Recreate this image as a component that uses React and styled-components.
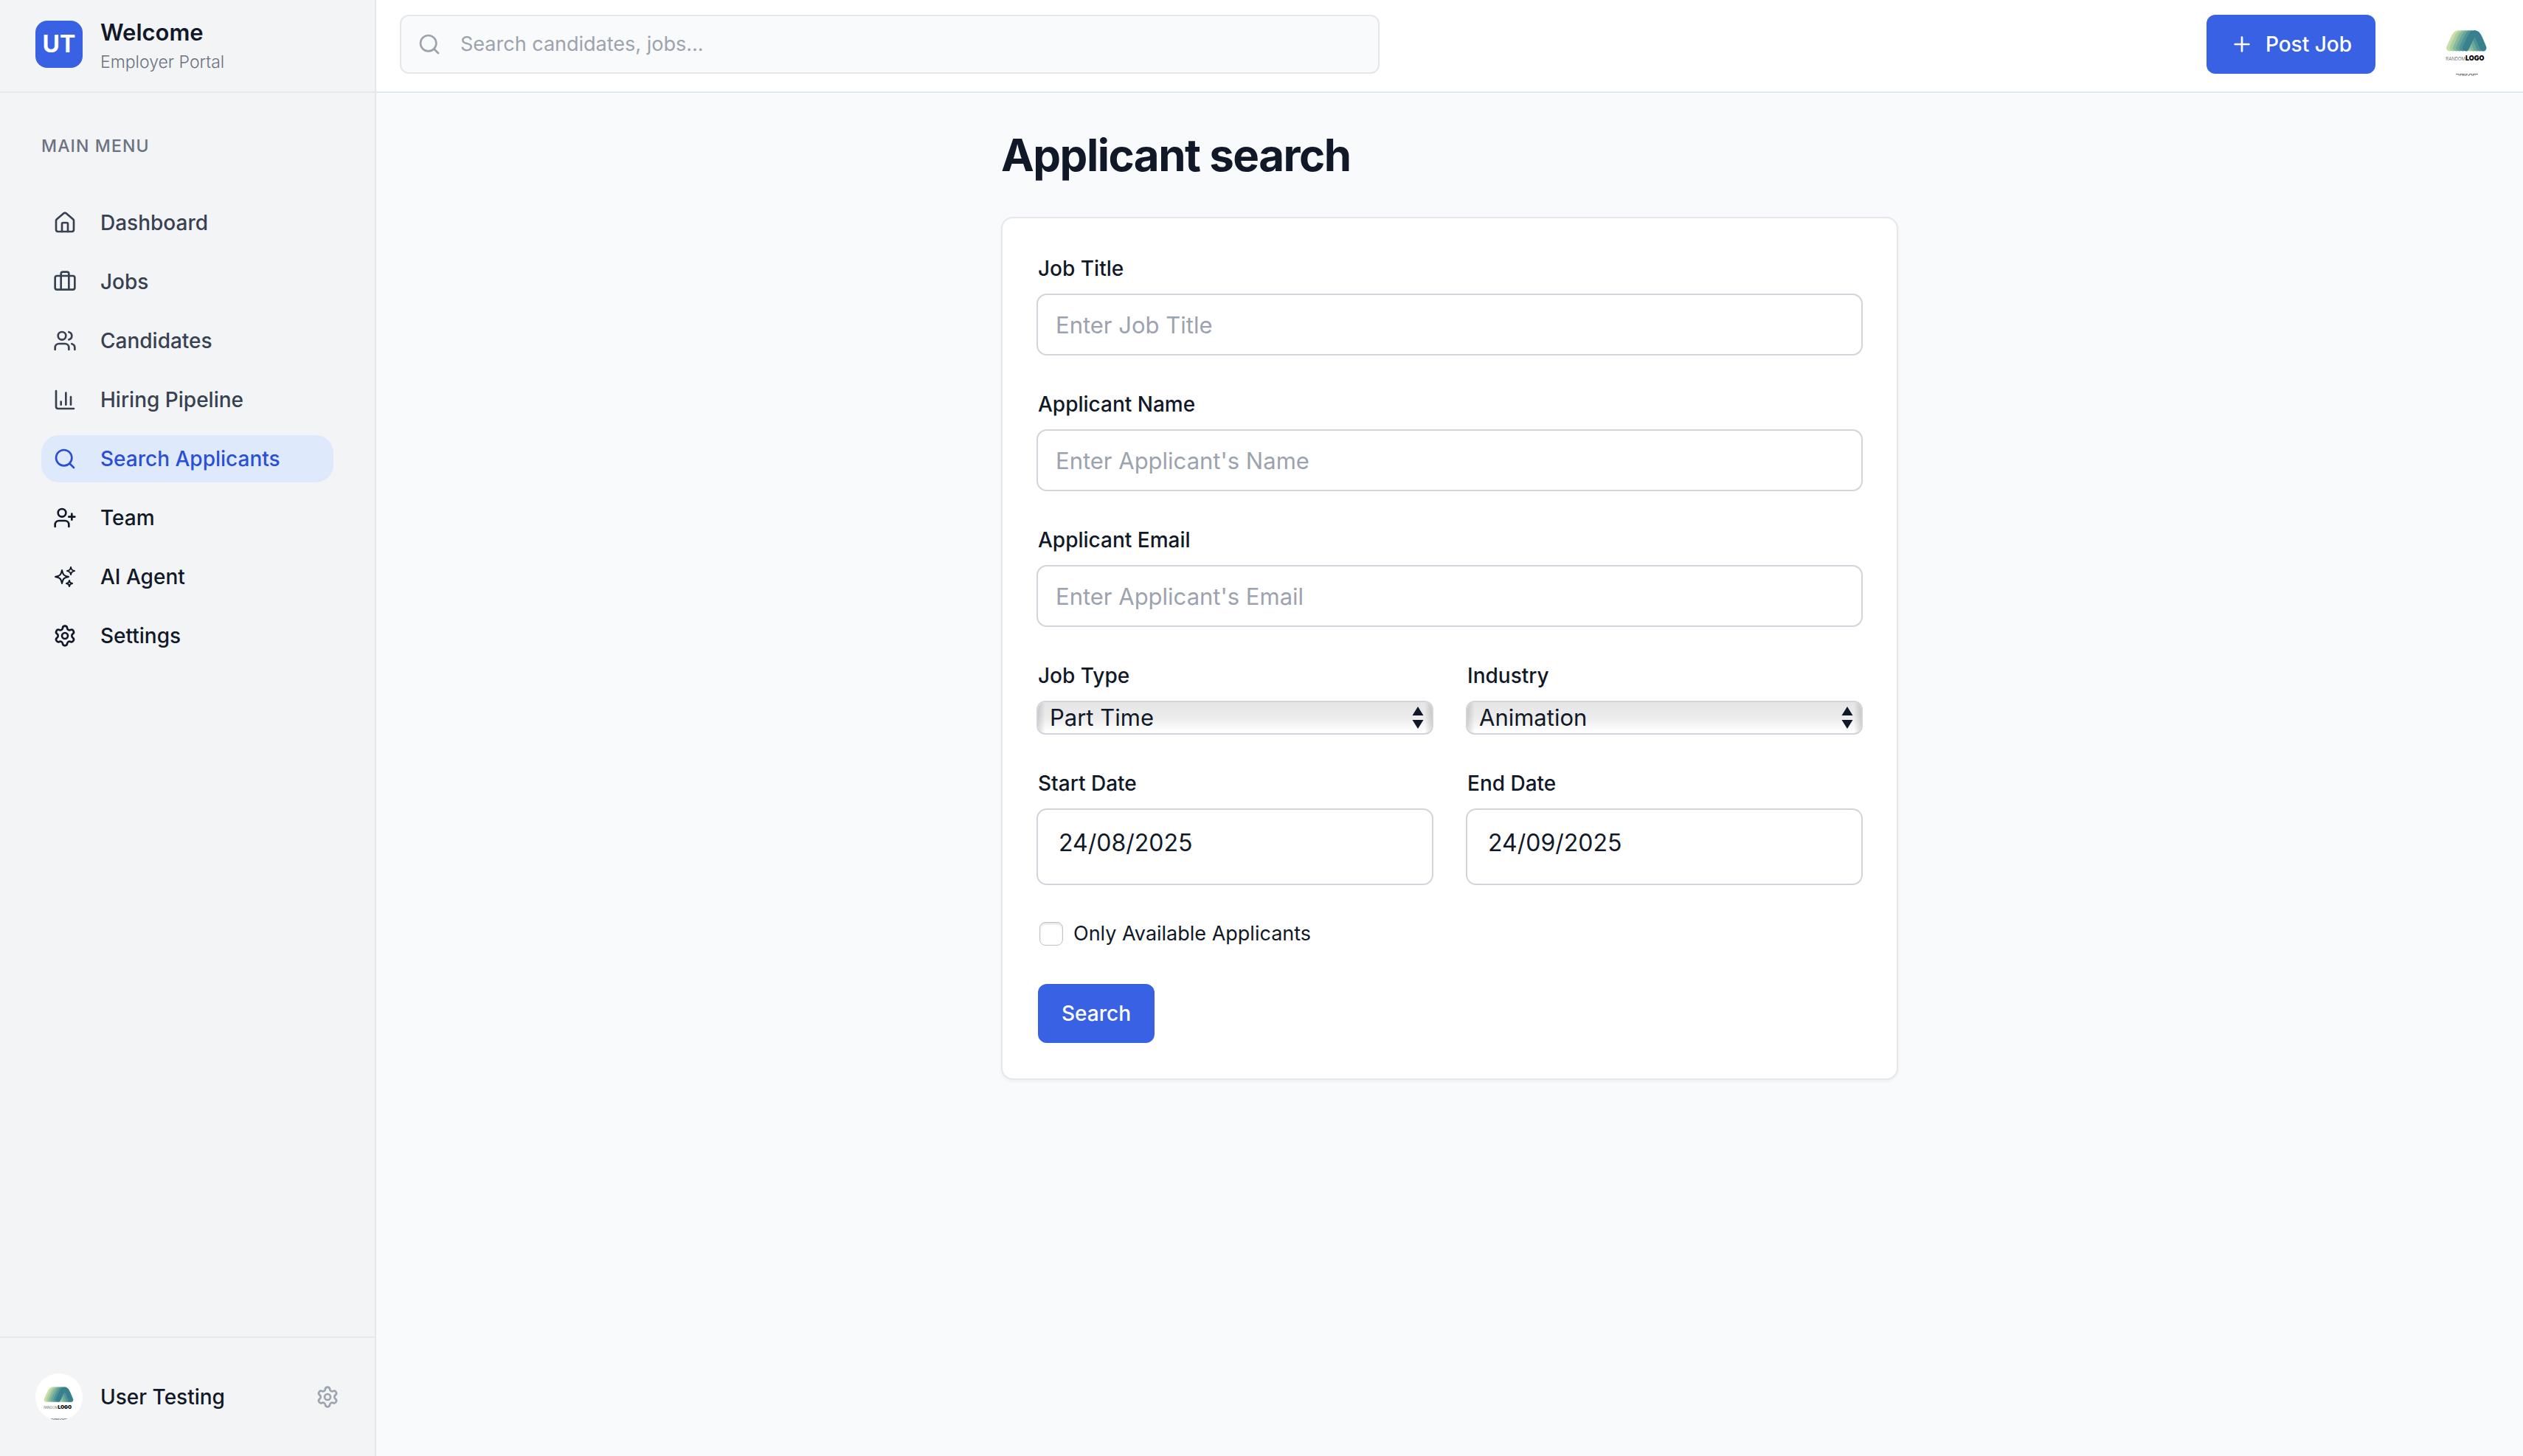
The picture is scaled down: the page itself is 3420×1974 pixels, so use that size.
import React, { useState } from "react";
import styled, { createGlobalStyle } from "styled-components";
import {
  House,
  Briefcase,
  Users,
  ChartColumn,
  Search,
  UserPlus,
  Settings,
  Plus,
} from "lucide-react";
import { HiOutlineSparkles } from "react-icons/hi2";

const color = {
  ink: "#111827",
  slate: "#374151",
  muted: "#6b7280",
  faint: "#9ca3af",
  line: "#e5e7eb",
  ring: "#d1d5db",
  page: "#f9fafc",
  side: "#f3f4f6",
  brand: "#3862e3",
  active: "#2a4fd6",
  activeBg: "#dee9fb",
};

const GlobalStyle = createGlobalStyle`
  *, *::before, *::after { box-sizing: border-box; }
  body {
    margin: 0;
    background: ${color.page};
    color: ${color.ink};
    font-family: Inter, "Liberation Sans", sans-serif;
    font-size: 28px;
    line-height: 40px;
    -webkit-font-smoothing: antialiased;
  }
  button, input, select { font: inherit; color: inherit; }
  h1, h2, p, ul { margin: 0; padding: 0; }
`;

const Shell = styled.div`
  display: grid;
  grid-template-columns: 510px minmax(0, 1fr);
  min-height: 100vh;
`;

const Sidebar = styled.aside`
  display: flex;
  flex-direction: column;
  background: ${color.side};
  border-right: 2px solid ${color.line};
`;

const Brand = styled.div`
  display: flex;
  gap: 24px;
  height: 126px;
  padding: 28px 48px;
  border-bottom: 2px solid ${color.line};
`;

const BrandMark = styled.div`
  display: grid;
  place-items: center;
  width: 64px;
  height: 64px;
  border-radius: 16px;
  background: ${color.brand};
  color: #fff;
  font-size: 32px;
  font-weight: 700;
`;

const BrandText = styled.div`
  display: flex;
  flex-direction: column;
  justify-content: center;
  gap: 4px;
  height: 64px;
  padding-top: 4px;
`;

const BrandTitle = styled.p`
  font-size: 31px;
  line-height: 40px;
  font-weight: 600;
`;

const BrandSub = styled.p`
  font-size: 23px;
  line-height: 32px;
  font-weight: 300;
  color: ${color.muted};
`;

const Menu = styled.nav`
  flex: 1;
  padding: 56px;
`;

const MenuTitle = styled.h2`
  margin-bottom: 56px;
  font-size: 23px;
  line-height: 32px;
  font-weight: 500;
  letter-spacing: 0.05em;
  text-transform: uppercase;
  color: ${color.muted};
`;

const MenuList = styled.ul`
  display: flex;
  flex-direction: column;
  gap: 16px;
  list-style: none;
`;

const MenuLink = styled.a`
  display: flex;
  align-items: center;
  gap: 32px;
  height: 64px;
  padding: 0 16px;
  border-radius: 24px;
  font-weight: 500;
  text-decoration: none;
  color: ${(p) => (p.$tone === "active" ? color.active : p.$tone === "soft" ? color.slate : color.ink)};
  background: ${(p) => (p.$tone === "active" ? color.activeBg : "transparent")};
`;

const Account = styled.div`
  display: flex;
  align-items: center;
  gap: 24px;
  padding: 48px;
  border-top: 2px solid ${color.line};
`;

const AccountName = styled.span`
  flex: 1;
  font-weight: 500;
`;

const IconButton = styled.button`
  display: grid;
  place-items: center;
  padding: 0;
  border: 0;
  background: none;
  color: ${color.faint};
`;

const Avatar = styled.svg`
  display: block;
  width: ${(p) => p.$size}px;
  height: ${(p) => p.$size}px;
  border-radius: 50%;
  background: #fff;
`;

const Main = styled.div`
  display: flex;
  flex-direction: column;
`;

const Topbar = styled.header`
  display: flex;
  align-items: flex-start;
  justify-content: space-between;
  height: 126px;
  padding: 20px 32px;
  background: #fff;
  border-bottom: 2px solid #e2e8f0;
`;

const SearchBox = styled.label`
  display: flex;
  align-items: center;
  gap: 26px;
  width: 48%;
  max-width: 1328px;
  height: 80px;
  padding: 0 22px;
  border: 2px solid ${color.line};
  border-radius: 12px;
  background: ${color.page};
  color: ${color.faint};
`;

const SearchInput = styled.input`
  flex: 1;
  min-width: 0;
  padding: 0;
  border: 0;
  outline: 0;
  background: none;
  color: ${color.ink};
  font-size: 27px;
  &::placeholder { color: ${color.faint}; opacity: 1; }
`;

const TopActions = styled.div`
  display: flex;
  align-items: center;
  gap: 80px;
  height: 80px;
`;

const PrimaryButton = styled.button`
  display: inline-flex;
  align-items: center;
  gap: 16px;
  height: 80px;
  padding: 0 32px;
  border: 0;
  border-radius: 12px;
  background: ${color.brand};
  color: #fff;
  font-weight: 500;
`;

const Content = styled.main`
  width: 100%;
  max-width: 1216px;
  margin: 0 auto;
  padding: 48px 0;
`;

const PageTitle = styled.h1`
  margin-bottom: 48px;
  font-size: 60px;
  line-height: 72px;
  font-weight: 700;
  letter-spacing: -0.025em;
`;

const Card = styled.form`
  display: flex;
  flex-direction: column;
  gap: 48px;
  padding: 48px;
  border: 2px solid ${color.line};
  border-radius: 16px;
  background: #fff;
  box-shadow: 0 2px 4px rgba(0, 0, 0, 0.05);
`;

const FieldRow = styled.div`
  display: grid;
  grid-template-columns: repeat(2, minmax(0, 1fr));
  gap: 48px;
`;

const Field = styled.div`
  display: flex;
  flex-direction: column;
  gap: 16px;
  min-width: 0;
`;

const Label = styled.label`
  font-weight: 500;
`;

const TextInput = styled.input`
  width: 100%;
  height: ${(p) => (p.$tall ? 100 : 80)}px;
  padding: ${(p) => (p.$tall ? "0 28px 12px" : "0 24px")};
  border: 0;
  border-radius: 12px;
  outline: 2px solid ${color.ring};
  background: #fff;
  font-size: ${(p) => (p.$tall ? 32 : 31)}px;
  &::placeholder { color: ${color.faint}; opacity: 1; }
`;

const SelectWrap = styled.div`
  position: relative;
  display: grid;
`;

const Select = styled.select`
  appearance: none;
  height: 42px;
  padding: 0 48px 0 16px;
  border: 0;
  border-radius: 10px;
  outline: 2px solid ${color.ring};
  background:
    linear-gradient(to right, rgba(0, 0, 0, 0.14), transparent 10px, transparent calc(100% - 10px), rgba(0, 0, 0, 0.14)),
    linear-gradient(#e5e5e5, #ececec 50%, #fff 95%);
  font-size: 31px;
  line-height: 40px;
`;

const SelectArrows = styled.svg`
  position: absolute;
  top: 6px;
  right: 11px;
  width: 16px;
  height: 30px;
  pointer-events: none;
  fill: ${color.ink};
`;

const CheckRow = styled.label`
  display: flex;
  align-items: center;
  gap: 14px;
  padding-left: 2px;
  font-size: 27px;
`;

const Checkbox = styled.input`
  appearance: none;
  width: 32px;
  height: 32px;
  margin: 0;
  border: 1px solid #c2c2c2;
  border-radius: 8px;
  background: #fff;
  box-shadow: inset 0 2px 3px rgba(0, 0, 0, 0.12);
  &:checked { background: ${color.brand}; }
`;

const Actions = styled.div`
  display: flex;
`;

const LogoWord = styled.text`
  font-family: Inter, sans-serif;
  font-size: ${(p) => (p.$bold ? 9 : 6)}px;
  font-weight: ${(p) => (p.$bold ? 900 : 300)};
  fill: ${(p) => (p.$bold ? "#000" : "#444")};
`;

// Back-to-front shades of the stacked arches in the company logo.
const arches = ["#c9dfa6", "#a9cfa1", "#86b99d", "#69a79a", "#4f9395", "#38808d"];

function LogoAvatar({ size, label }) {
  return (
    <Avatar $size={size} viewBox="0 0 88 88" role="img" aria-label={label}>
      <g fill="none" strokeWidth="9" strokeLinecap="round" strokeLinejoin="round">
        {arches.map((shade, i) => (
          <path
            key={shade}
            stroke={shade}
            transform={`translate(${(i - 5) * 4.4} 0)`}
            d="M42.5 49 L48 37 Q51 29.5 54.5 29.5 Q58 29.5 61 37 L66 49"
          />
        ))}
      </g>
      <LogoWord x="42" y="66" textAnchor="end">RANDOM</LogoWord>
      <LogoWord x="42" y="66" $bold>LOGO</LogoWord>
      <path d="M29 84.5H59M32 86H56" stroke="#777" strokeWidth="1" strokeDasharray="4 1 7 1 3 2" />
    </Avatar>
  );
}

const menu = [
  { label: "Dashboard", icon: House, tone: "soft" },
  { label: "Jobs", icon: Briefcase, tone: "soft" },
  { label: "Candidates", icon: Users, tone: "soft" },
  { label: "Hiring Pipeline", icon: ChartColumn, tone: "soft" },
  { label: "Search Applicants", icon: Search, tone: "active" },
  { label: "Team", icon: UserPlus, tone: "dark" },
  { label: "AI Agent", icon: HiOutlineSparkles, tone: "dark" },
  { label: "Settings", icon: Settings, tone: "dark" },
];

function SelectField({ id, label, options }) {
  return (
    <Field>
      <Label htmlFor={id}>{label}</Label>
      <SelectWrap>
        <Select id={id} defaultValue={options[0]}>
          {options.map((o) => (
            <option key={o}>{o}</option>
          ))}
        </Select>
        <SelectArrows viewBox="0 0 16 30" aria-hidden="true">
          <path d="M8 0 15.500 12H.5zM8 30 15.500 18H.5z" />
        </SelectArrows>
      </SelectWrap>
    </Field>
  );
}

function TextField({ id, label, ...rest }) {
  return (
    <Field>
      <Label htmlFor={id}>{label}</Label>
      <TextInput id={id} type="text" {...rest} />
    </Field>
  );
}

export default function App() {
  const [onlyAvailable, setOnlyAvailable] = useState(false);
  return (
    <>
      <GlobalStyle />
      <Shell>
        <Sidebar>
          <Brand>
            <BrandMark>UT</BrandMark>
            <BrandText>
              <BrandTitle>Welcome</BrandTitle>
              <BrandSub>Employer Portal</BrandSub>
            </BrandText>
          </Brand>
          <Menu>
            <MenuTitle>Main Menu</MenuTitle>
            <MenuList>
              {menu.map(({ label, icon: Icon, tone }) => (
                <li key={label}>
                  <MenuLink href="#" $tone={tone}>
                    <Icon size={32} />
                    {label}
                  </MenuLink>
                </li>
              ))}
            </MenuList>
          </Menu>
          <Account>
            <LogoAvatar size={64} label="User Testing" />
            <AccountName>User Testing</AccountName>
            <IconButton type="button" aria-label="Account settings">
              <Settings size={32} />
            </IconButton>
          </Account>
        </Sidebar>
        <Main>
          <Topbar>
            <SearchBox>
              <Search size={32} />
              <SearchInput type="search" placeholder="Search candidates, jobs..." aria-label="Search candidates, jobs" />
            </SearchBox>
            <TopActions>
              <PrimaryButton type="button">
                <Plus size={32} />
                Post Job
              </PrimaryButton>
              <LogoAvatar size={88} label="Company" />
            </TopActions>
          </Topbar>
          <Content>
            <PageTitle>Applicant search</PageTitle>
            <Card onSubmit={(e) => e.preventDefault()}>
              <TextField id="job-title" label="Job Title" placeholder="Enter Job Title" />
              <TextField id="name" label="Applicant Name" placeholder="Enter Applicant's Name" />
              <TextField id="email" label="Applicant Email" placeholder="Enter Applicant's Email" />
              <FieldRow>
                <SelectField id="job-type" label="Job Type" options={["Part Time", "Full Time", "Contract"]} />
                <SelectField id="industry" label="Industry" options={["Animation", "Design", "Software"]} />
              </FieldRow>
              <FieldRow>
                <TextField id="start" label="Start Date" defaultValue="24/08/2025" $tall />
                <TextField id="end" label="End Date" defaultValue="24/09/2025" $tall />
              </FieldRow>
              <CheckRow>
                <Checkbox
                  type="checkbox"
                  checked={onlyAvailable}
                  onChange={(e) => setOnlyAvailable(e.target.checked)}
                />
                Only Available Applicants
              </CheckRow>
              <Actions>
                <PrimaryButton type="submit">Search</PrimaryButton>
              </Actions>
            </Card>
          </Content>
        </Main>
      </Shell>
    </>
  );
}
